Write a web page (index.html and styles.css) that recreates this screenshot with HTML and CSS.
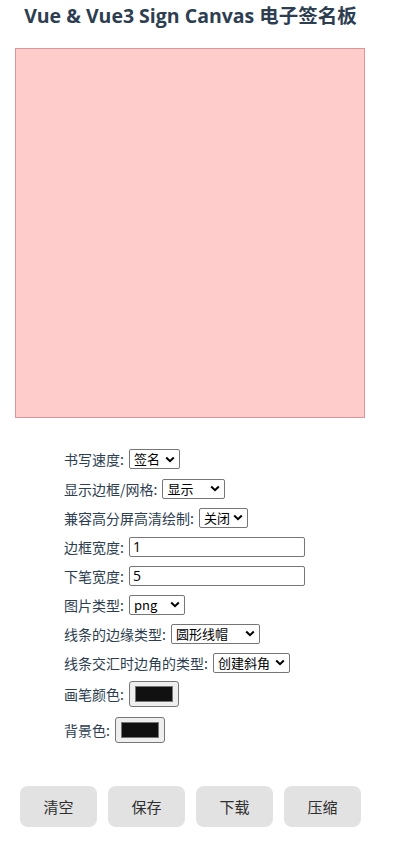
FILE: index.html
```html
<!DOCTYPE html>
<html lang="zh-CN">
<head>
<meta charset="utf-8">
<link rel="stylesheet" href="styles.css">
</head>
<body>
<div class="app">
  <h1 class="title">Vue &amp; Vue3 Sign Canvas 电子签名板</h1>
  <div class="canvas"></div>
  <div class="controls">
    <div class="row"><span class="label">书写速度:</span><select class="sel w51"><option>签名</option></select></div>
    <div class="row"><span class="label">显示边框/网格:</span><select class="sel w63"><option>显示</option></select></div>
    <div class="row"><span class="label">兼容高分屏高清绘制:</span><select class="sel w49"><option>关闭</option></select></div>
    <div class="row"><span class="label">边框宽度:</span><input class="txt" type="text" value="1"></div>
    <div class="row"><span class="label">下笔宽度:</span><input class="txt" type="text" value="5"></div>
    <div class="row"><span class="label">图片类型:</span><select class="sel w56"><option>png</option></select></div>
    <div class="row"><span class="label">线条的边缘类型:</span><select class="sel w89"><option>圆形线帽</option></select></div>
    <div class="row"><span class="label">线条交汇时边角的类型:</span><select class="sel w77"><option>创建斜角</option></select></div>
    <div class="row row-c1"><span class="label">画笔颜色:</span><span class="color"><span class="swatch"></span></span></div>
    <div class="row row-c2"><span class="label">背景色:</span><span class="color"><span class="swatch"></span></span></div>
  </div>
  <div class="buttons">
    <button class="btn">清空</button>
    <button class="btn">保存</button>
    <button class="btn">下载</button>
    <button class="btn">压缩</button>
  </div>
</div>
</body>
</html>
```

FILE: styles.css
```css
* { box-sizing: border-box; }
body {
  margin: 0;
  background: #fff;
  font-family: "Open Sans", "Noto Sans CJK SC", sans-serif;
  color: #2c3e50;
}
.app { width: 401px; }
.title {
  margin: 0;
  padding-top: 3px;
  padding-right: 20px;
  height: 48px;
  text-align: center;
  font-size: 19.5px;
  font-weight: 700;
  line-height: 26px;
  color: #2c3e50;
  white-space: nowrap;
}
.canvas {
  margin-left: 15px;
  width: 350px;
  height: 370px;
  background: #ffcccc;
  border: 1px solid #e3929a;
}
.controls {
  padding-left: 64px;
  padding-top: 26px;
  display: flex;
  flex-direction: column;
}
.row {
  height: 29px;
  display: flex;
  align-items: center;
  font-size: 14px;
}
.row:first-child { height: 30px; }
.row-c1 { height: 33px; }
.row-c2 { height: 39px; }
.label {
  font-family: "Noto Sans CJK SC", sans-serif;
  font-size: 14px;
  color: #2c3e50;
  margin-right: 5px;
  white-space: nowrap;
}
.sel {
  -webkit-appearance: none;
  appearance: none;
  height: 20px;
  font-size: 13px;
  line-height: 18px;
  font-family: "Noto Sans CJK SC", sans-serif;
  color: #000;
  background-color: #fff;
  background-image: url("data:image/svg+xml,%3Csvg xmlns='http://www.w3.org/2000/svg' width='10' height='7' viewBox='0 0 10 7'%3E%3Cpath d='M1.2 1.5 L5 5.2 L8.8 1.5' fill='none' stroke='%23000' stroke-width='2'/%3E%3C/svg%3E");
  background-repeat: no-repeat;
  background-position: right 4px center;
  background-size: 10px 7px;
  border: 1px solid #767676;
  border-radius: 2px;
  padding: 0 0 0 4px;
}
.w51 { width: 51px; }
.w63 { width: 63px; }
.w49 { width: 49px; }
.w56 { width: 56px; }
.w89 { width: 89px; }
.w77 { width: 77px; }
.txt {
  width: 176px;
  height: 20px;
  font-size: 14px;
  font-family: "Open Sans", sans-serif;
  color: #000;
  border: 1px solid #767676;
  border-radius: 2px;
  padding: 0 3px;
}
.color {
  width: 50px;
  height: 26px;
  background: #efefef;
  border: 1px solid #767676;
  border-radius: 3px;
  display: flex;
  align-items: center;
  justify-content: center;
}
.swatch {
  width: 38px;
  height: 16px;
  background: #111;
  border: 1px solid #777;
}
.buttons {
  display: flex;
  gap: 11px;
  padding-left: 20px;
  margin-top: 37px;
}
.btn {
  width: 77px;
  height: 41px;
  border: none;
  border-radius: 8px;
  background: #e2e2e2;
  color: #2f2f2f;
  font-size: 15px;
  font-family: "Noto Sans CJK SC", sans-serif;
}
```
